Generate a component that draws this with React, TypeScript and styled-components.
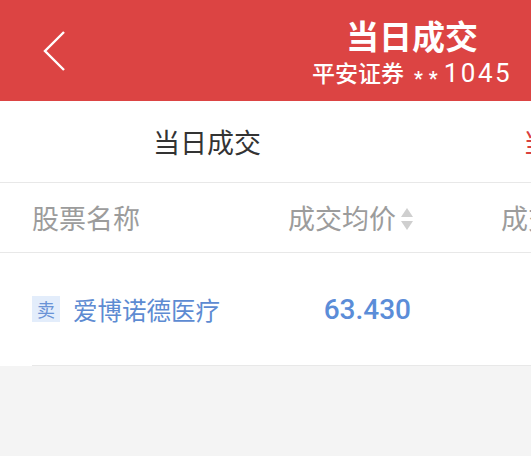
import React from 'react';
import styled, { createGlobalStyle } from 'styled-components';

const GlobalStyle = createGlobalStyle`
  html, body {
    margin: 0;
    padding: 0;
    background: #f4f4f4;
    font-family: Roboto, "Noto Sans CJK SC", sans-serif;
  }
`;

const Page = styled.div`
  width: 531px;
  height: 456px;
  overflow: hidden;
  background: #f4f4f4;
`;

const NavBar = styled.div`
  height: 101px;
  background: #dc4443;
  display: flex;
  align-items: center;
  color: #fff;
`;

const BackButton = styled.div`
  width: 110px;
  height: 101px;
  display: flex;
  align-items: center;
  padding-left: 40px;
  box-sizing: border-box;
`;

const TitleBlock = styled.div`
  margin-left: 202px;
  display: flex;
  flex-direction: column;
  align-items: center;
  padding-top: 8px;
`;

const Title = styled.div`
  font-family: "Noto Sans CJK SC", sans-serif;
  font-size: 33px;
  font-weight: 700;
  line-height: 40px;
`;

const SubTitle = styled.div`
  font-family: "Noto Sans CJK SC", sans-serif;
  font-size: 23px;
  font-weight: 500;
  line-height: 30px;
  margin-top: 2px;
  white-space: nowrap;
`;

const Stars = styled.span`
  font-family: Roboto, sans-serif;
  font-size: 20px;
  margin-left: 10px;
  letter-spacing: 6px;
  vertical-align: -4px;
`;

const Account = styled.span`
  font-family: Roboto, sans-serif;
  font-size: 26px;
  font-weight: 400;
  letter-spacing: 2.5px;
`;

const Tabs = styled.div`
  height: 81px;
  background: #fff;
  border-bottom: 1px solid #e8e8e8;
  display: flex;
  padding-left: 22px;
  overflow: hidden;
`;

const Tab = styled.div<{ $active?: boolean }>`
  flex: 0 0 370px;
  display: flex;
  align-items: center;
  justify-content: center;
  font-family: "Noto Sans CJK SC", sans-serif;
  font-size: 27px;
  color: ${p => (p.$active ? '#d9403e' : '#333')};
`;

const Row = styled.div<{ $h: number }>`
  display: grid;
  grid-template-columns: 218px 164px 87px 200px;
  align-items: center;
  height: ${p => p.$h}px;
  border-bottom: 1px solid #e8e8e8;
  white-space: nowrap;
`;

const HeadRow = styled(Row)`
  padding-left: 32px;
  background: #fff;
`;

const RowWrap = styled.div`
  padding-left: 32px;
  background: #fff;
  overflow: hidden;
`;

const HeadCell = styled.div<{ $right?: boolean }>`
  font-family: "Noto Sans CJK SC", sans-serif;
  font-size: 27px;
  color: #9c9c9c;
  display: flex;
  align-items: center;
  justify-content: ${p => (p.$right ? 'flex-end' : 'flex-start')};
`;

const SortIcon = styled.svg`
  margin-left: 4px;
  margin-top: 2px;
  flex: none;
`;

const NameCell = styled.div`
  display: flex;
  align-items: center;
`;

const Badge = styled.span`
  width: 28px;
  height: 26px;
  background: #e3edfb;
  color: #6a93d6;
  font-family: "Noto Sans CJK SC", sans-serif;
  font-size: 18px;
  display: flex;
  align-items: center;
  justify-content: center;
  margin-right: 13px;
`;

const StockName = styled.span`
  font-family: "Noto Sans CJK SC", sans-serif;
  font-size: 24.5px;
  color: #5d8bd2;
`;

const Price = styled.div`
  font-family: Roboto, sans-serif;
  font-size: 28px;
  font-weight: 500;
  color: #5b8dd8;
  text-align: right;
  padding-right: 3px;
`;

export default function App() {
  return (
    <Page>
      <GlobalStyle />
      <NavBar>
        <BackButton>
          <svg width="30" height="44" viewBox="0 0 30 44">
            <polyline points="24,3 5,22 24,41" fill="none" stroke="#fff" strokeWidth="2.4" />
          </svg>
        </BackButton>
        <TitleBlock>
          <Title>当日成交</Title>
          <SubTitle>
            平安证券<Stars>**</Stars><Account>1045</Account>
          </SubTitle>
        </TitleBlock>
      </NavBar>
      <Tabs>
        <Tab>当日成交</Tab>
        <Tab $active>当日委托</Tab>
      </Tabs>
      <HeadRow $h={69}>
        <HeadCell>股票名称</HeadCell>
        <HeadCell $right>
          成交均价
          <SortIcon width="14" height="24" viewBox="0 0 14 24">
            <polygon points="7,1 13,10 1,10" fill="#cfcfcf" />
            <polygon points="1,14 13,14 7,23" fill="#cfcfcf" />
          </SortIcon>
        </HeadCell>
        <div />
        <HeadCell>成交数量</HeadCell>
      </HeadRow>
      <RowWrap>
        <Row $h={112}>
          <NameCell>
            <Badge>卖</Badge>
            <StockName>爱博诺德医疗</StockName>
          </NameCell>
          <Price>63.430</Price>
          <div />
          <div />
        </Row>
      </RowWrap>
    </Page>
  );
}
